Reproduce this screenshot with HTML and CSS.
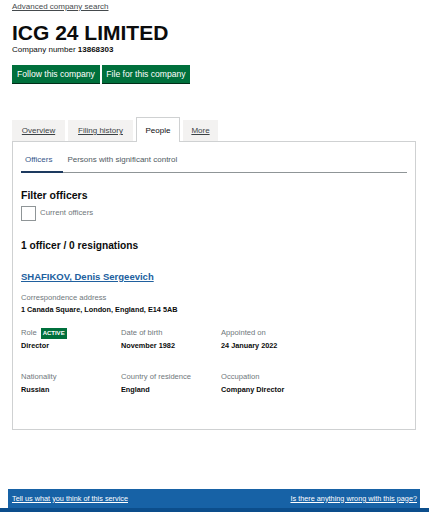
FILE: index.html
```html
<!DOCTYPE html>
<html lang="en">
<head>
<meta charset="utf-8">
<title>ICG 24 LIMITED</title>
<link rel="stylesheet" href="styles.css">
</head>
<body>
<div class="page">
  <a class="back" href="#">Advanced company search</a>
  <h1 class="title">ICG 24 LIMITED</h1>
  <p class="number">Company number <strong>13868303</strong></p>
  <div class="actions">
    <a class="btn" href="#">Follow this company</a>
    <a class="btn" href="#">File for this company</a>
  </div>

  <ul class="tabs">
    <li class="tab tab-overview"><a href="#">Overview</a></li>
    <li class="tab tab-filing"><a href="#">Filing history</a></li>
    <li class="tab active"><span>People</span></li>
    <li class="tab tab-more"><a href="#">More</a></li>
  </ul>
  <div class="panel">
    <div class="subtabs">
      <span class="subtab current">Officers</span>
      <span class="subtab">Persons with significant control</span>
    </div>

    <h2 class="filter-title">Filter officers</h2>
    <label class="check"><span class="box"></span><span class="check-label">Current officers</span></label>

    <h2 class="count">1 officer / 0 resignations</h2>

    <div class="officer">
      <a class="name" href="#">SHAFIKOV, Denis Sergeevich</a>
      <div class="field address">
        <div class="label">Correspondence address</div>
        <div class="value">1 Canada Square, London, England, E14 5AB</div>
      </div>
      <div class="grid">
        <div class="field">
          <div class="label">Role <span class="badge">ACTIVE</span></div>
          <div class="value">Director</div>
        </div>
        <div class="field">
          <div class="label">Date of birth</div>
          <div class="value">November 1982</div>
        </div>
        <div class="field">
          <div class="label">Appointed on</div>
          <div class="value">24 January 2022</div>
        </div>
        <div class="field">
          <div class="label">Nationality</div>
          <div class="value">Russian</div>
        </div>
        <div class="field">
          <div class="label">Country of residence</div>
          <div class="value">England</div>
        </div>
        <div class="field">
          <div class="label">Occupation</div>
          <div class="value">Company Director</div>
        </div>
      </div>
    </div>
  </div>
</div>
<footer class="footer">
  <div class="footer-bar">
    <a href="#">Tell us what you think of this service</a>
    <a href="#">Is there anything wrong with this page?</a>
  </div>
</footer>
</body>
</html>
```

FILE: styles.css
```css
* { box-sizing: border-box; }
html, body { margin: 0; padding: 0; background: #fff; }
body {
  font-family: "Liberation Sans", Arial, sans-serif;
  color: #0b0c0c;
  width: 429px;
  height: 512px;
  overflow: hidden;
  position: relative;
  font-size: 8px;
  line-height: 12px;
}
.page { padding: 0 13px 0 12px; }
.back {
  display: block;
  width: fit-content;
  font-size: 8px;
  line-height: 14px;
  color: #454a4d;
  text-decoration: underline;
}
.title {
  margin: 8px 0 0;
  font-size: 21px;
  line-height: 22px;
  font-weight: 700;
}
.number {
  margin: 0;
  font-size: 8px;
  line-height: 12px;
}
.actions {
  margin-top: 9px;
  display: flex;
  gap: 2px;
}
.btn {
  background: #00703c;
  color: #fff;
  text-decoration: none;
  font-size: 8.6px;
  line-height: 18px;
  height: 18px;
  width: 88px;
  text-align: center;
  white-space: nowrap;
  box-shadow: 0 1px 0 #002d18;
}
.tabs {
  list-style: none;
  margin: 34px 0 0;
  padding: 0;
  display: flex;
  align-items: flex-end;
  gap: 3px;
  position: relative;
  z-index: 1;
}
.tab {
  background: #f3f2f1;
  height: 21px;
  font-size: 8px;
  line-height: 21px;
  text-align: center;
  white-space: nowrap;
}
.tab a { color: #3c4245; text-decoration: underline; }
.tab-overview { width: 53px; }
.tab-filing { width: 65px; }
.tab-more { width: 35px; }
.tab.active {
  background: #fff;
  height: 25px;
  line-height: 25px;
  border: 1px solid #cfd1d2;
  border-bottom: 0;
  margin-bottom: -1px;
  width: 44px;
  color: #0b0c0c;
}
.panel {
  border: 1px solid #cfd1d2;
  height: 289px;
  padding: 0 8px;
}
.subtabs {
  margin-top: 11px;
  display: flex;
  align-items: flex-start;
  border-bottom: 1px solid #8f9597;
  font-size: 8px;
  line-height: 14px;
  color: #505a5f;
}
.subtab { padding: 0 4px 5px 4px; white-space: nowrap; }
.subtab.current {
  padding-right: 11px;
  padding-bottom: 4px;
  color: #36568a;
  border-bottom: 2px solid #1d3a5f;
  margin-bottom: -1px;
}
.filter-title {
  margin: 15px 0 0;
  font-size: 10.5px;
  line-height: 14px;
}
.check {
  display: flex;
  align-items: center;
  gap: 4px;
  margin-top: 4px;
  height: 15px;
}
.box {
  width: 15px;
  height: 15px;
  border: 1px solid #8f9597;
  background: #fff;
}
.check-label {
  font-size: 7.8px;
  color: #6f777b;
  margin-top: -1px;
}
.count {
  margin: 18px 0 0;
  font-size: 10.2px;
  line-height: 14px;
}
.officer { margin-top: 17px; }
.name {
  display: block;
  width: fit-content;
  font-size: 9.5px;
  line-height: 14px;
  font-weight: 700;
  color: #20609e;
  text-decoration: underline;
}
.address { margin-top: 8px; }
.label {
  font-size: 7.6px;
  line-height: 12px;
  height: 12px;
  color: #6f777b;
  display: flex;
  align-items: center;
  gap: 4px;
}
.value {
  font-size: 7.3px;
  line-height: 12px;
  font-weight: 700;
  color: #0b0c0c;
}
.grid .value { margin-top: 1px; }
.badge {
  background: #00703c;
  color: #fff;
  font-size: 6px;
  font-weight: 700;
  line-height: 11px;
  height: 11px;
  padding: 0 2px;
}
.grid {
  display: grid;
  grid-template-columns: 100px 100px 100px;
  row-gap: 19px;
  margin-top: 11px;
}
.footer {
  position: absolute;
  left: 0;
  right: 0;
  bottom: 0;
  border-bottom: 4px solid #0c4e8c;
}
.footer-bar {
  margin: 0 9px 0 8px;
  height: 19px;
  background: #1762a6;
  display: flex;
  justify-content: space-between;
  align-items: center;
  padding: 0 3px 0 4px;
}
.footer-bar a {
  color: #fff;
  font-size: 7.3px;
  text-decoration: underline;
}
```
